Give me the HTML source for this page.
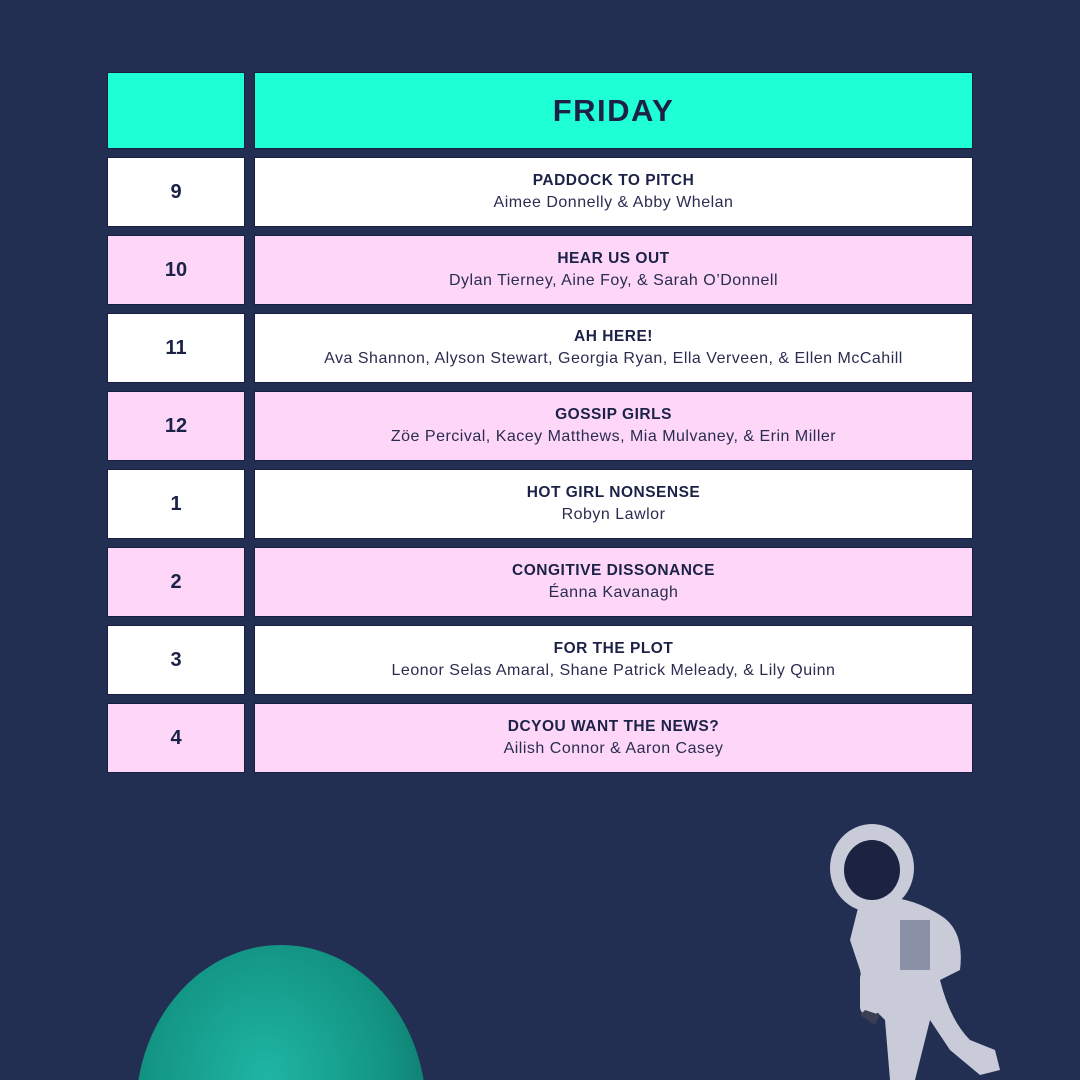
<!DOCTYPE html>
<html style="width:1080px;height:1080px;overflow:hidden"><head><meta charset="utf-8"><style>
body{margin:0;width:1080px;height:1080px;background:#232f52;position:relative;overflow:hidden;font-family:"Liberation Sans",sans-serif;color:#1c2147}
.c{position:absolute;display:flex;flex-direction:column;align-items:center;justify-content:center;text-align:center;box-shadow:0 0 0 1px rgba(10,15,40,.5)}
.l{left:108px;width:136px}
.r{left:255px;width:717px}
.w{background:#fff}.p{background:#fdd6f8}.g{background:#1effd6}
.n{font-weight:bold;font-size:20px}
.t{font-weight:bold;font-size:15.5px;letter-spacing:.5px;line-height:22px}
.s{font-size:16px;letter-spacing:.5px;line-height:22px;color:#2a2d50}
</style></head><body>
<div class="c l g" style="top:73px;height:75px"></div>
<div class="c r g" style="top:73px;height:75px"><span style="font-weight:bold;font-size:31px;letter-spacing:1.5px">FRIDAY</span></div>

<div class="c l w" style="top:158px;height:68px"><span class="n">9</span></div>
<div class="c r w" style="top:158px;height:68px"><span class="t">PADDOCK TO PITCH</span><span class="s">Aimee Donnelly &amp; Abby Whelan</span></div>
<div class="c l p" style="top:236px;height:68px"><span class="n">10</span></div>
<div class="c r p" style="top:236px;height:68px"><span class="t">HEAR US OUT</span><span class="s">Dylan Tierney, Aine Foy, &amp; Sarah O’Donnell</span></div>
<div class="c l w" style="top:314px;height:68px"><span class="n">11</span></div>
<div class="c r w" style="top:314px;height:68px"><span class="t">AH HERE!</span><span class="s">Ava Shannon, Alyson Stewart, Georgia Ryan, Ella Verveen, &amp; Ellen McCahill</span></div>
<div class="c l p" style="top:392px;height:68px"><span class="n">12</span></div>
<div class="c r p" style="top:392px;height:68px"><span class="t">GOSSIP GIRLS</span><span class="s">Zöe Percival, Kacey Matthews, Mia Mulvaney, &amp; Erin Miller</span></div>
<div class="c l w" style="top:470px;height:68px"><span class="n">1</span></div>
<div class="c r w" style="top:470px;height:68px"><span class="t">HOT GIRL NONSENSE</span><span class="s">Robyn Lawlor</span></div>
<div class="c l p" style="top:548px;height:68px"><span class="n">2</span></div>
<div class="c r p" style="top:548px;height:68px"><span class="t">CONGITIVE DISSONANCE</span><span class="s">Éanna Kavanagh</span></div>
<div class="c l w" style="top:626px;height:68px"><span class="n">3</span></div>
<div class="c r w" style="top:626px;height:68px"><span class="t">FOR THE PLOT</span><span class="s">Leonor Selas Amaral, Shane Patrick Meleady, &amp; Lily Quinn</span></div>
<div class="c l p" style="top:704px;height:68px"><span class="n">4</span></div>
<div class="c r p" style="top:704px;height:68px"><span class="t">DCYOU WANT THE NEWS?</span><span class="s">Ailish Connor &amp; Aaron Casey</span></div>

<svg style="position:absolute;left:0;top:800px" width="1080" height="280" viewBox="0 800 1080 280">
<defs><radialGradient id="pg" cx="45%" cy="40%" r="60%"><stop offset="0" stop-color="#1fb5a3"/><stop offset=".7" stop-color="#139483"/><stop offset="1" stop-color="#0f7a6e"/></radialGradient></defs>
<ellipse cx="281" cy="1110" rx="145" ry="165" fill="url(#pg)"/>
<g transform="translate(820 820)">
<g fill="#c9ccd8">
<ellipse cx="52" cy="48" rx="42" ry="44"/>
<path d="M40 80 Q80 70 120 95 Q145 110 140 150 L120 160 Q130 200 150 220 L175 230 L180 250 L160 255 L130 230 L110 200 L100 240 L95 260 L70 260 L65 200 L45 180 L40 150 L30 120 Z"/>
<rect x="40" y="150" width="20" height="45" rx="8"/>
</g>
<ellipse cx="52" cy="50" rx="28" ry="30" fill="#1c2340"/>
<path d="M45 190 L40 195 L55 205 L60 195 Z" fill="#3a3f55"/>
<rect x="80" y="100" width="30" height="50" fill="#8a90a5"/>
</g>
</svg>
</body></html>
